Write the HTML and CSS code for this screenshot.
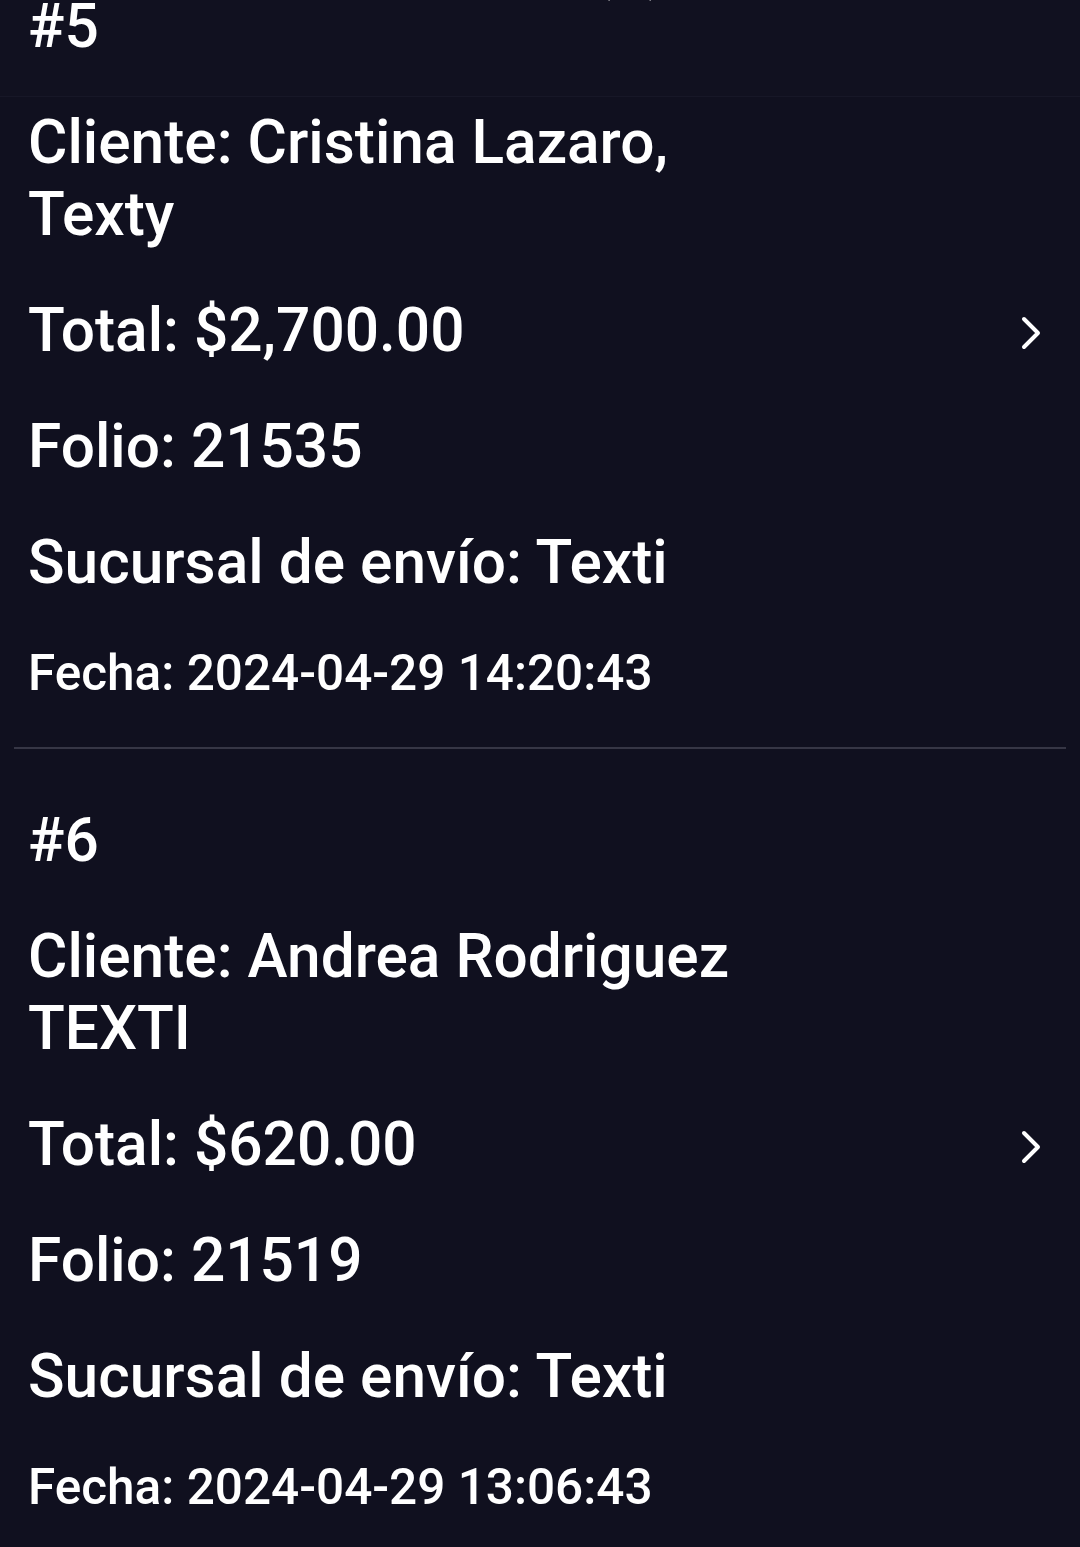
FILE: index.html
```html
<!DOCTYPE html>
<html lang="es">

<head>
    <meta charset="UTF-8">
    <meta name="viewport" content="width=device-width, initial-scale=1.0">
    <title>Pedidos</title>
    <link rel="stylesheet" href="styles.css">
</head>

<body>
    <div class="screen">
        <div class="top-band">
            <p class="page-title">Pedidos (6)</p>
        </div>
        <div class="order-list">
            <div class="order">
                <div class="order-info">
                    <p class="order-num">#5</p>
                    <p>Cliente: Cristina Lazaro,<br>Texty</p>
                    <p>Total: $2,700.00</p>
                    <p>Folio: 21535</p>
                    <p>Sucursal de envío: Texti</p>
                    <p class="order-date">Fecha: 2024-04-29 14:20:43</p>
                </div>
                <svg class="chevron" viewBox="0 0 24 36" width="24" height="36">
                    <polyline points="4,4 18,18 4,32" fill="none" stroke="#fff" stroke-width="4" stroke-linecap="round" stroke-linejoin="round" />
                </svg>
            </div>
            <div class="order">
                <div class="order-info">
                    <p class="order-num">#6</p>
                    <p>Cliente: Andrea Rodriguez<br>TEXTI</p>
                    <p>Total: $620.00</p>
                    <p>Folio: 21519</p>
                    <p>Sucursal de envío: Texti</p>
                    <p class="order-date">Fecha: 2024-04-29 13:06:43</p>
                </div>
                <svg class="chevron" viewBox="0 0 24 36" width="24" height="36">
                    <polyline points="4,4 18,18 4,32" fill="none" stroke="#fff" stroke-width="4" stroke-linecap="round" stroke-linejoin="round" />
                </svg>
            </div>
        </div>
    </div>
</body>

</html>
```

FILE: styles.css
```css
body {
    font-family: Roboto, "Noto Sans", Arial, sans-serif;
    background-color: #10101f;
    color: white;
    margin: 0;
    padding: 0;
}

.screen {
    position: relative;
    height: 1547px;
    overflow: hidden;
}

/* list is scrolled, first order is partly under the top band */
.order-list {
    margin-top: -65px;
}

.top-band {
    position: absolute;
    top: 0;
    left: 0;
    right: 0;
    height: 96px;
    background: rgba(255, 255, 255, 0.008);
    border-bottom: 1px solid #171727;
    overflow: hidden;
    z-index: 1;
}

.page-title {
    position: absolute;
    left: 350px;
    top: -70px;
    margin: 0;
    font-size: 62px;
    font-weight: 500;
    line-height: 72px;
}

.order {
    display: flex;
    align-items: center;
    margin: 0 14px;
    padding: 56px 0 44px 14px;
    border-bottom: 2px solid #363645;
}

.order-info {
    flex: 1;
    display: flex;
    flex-direction: column;
    gap: 44px;
}

.order-info p {
    margin: 0;
    font-size: 60.4px;
    font-weight: 500;
    line-height: 72px;
}

.order-info .order-date {
    font-size: 49.5px;
    line-height: 60px;
}

.chevron {
    margin: 0 22px 28px 0;
}
```
